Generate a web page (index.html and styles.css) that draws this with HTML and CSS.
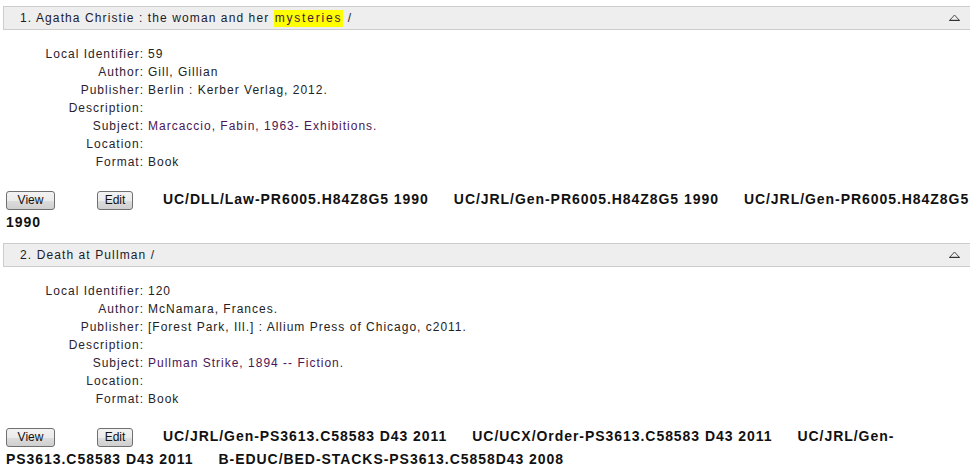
FILE: index.html
```html
<!DOCTYPE html>
<html>
<head>
<meta charset="utf-8">
<link rel="stylesheet" href="styles.css">
</head>
<body>
<div class="results">
  <div class="record">
    <div class="rec-head">
      <span class="title">1. Agatha Christie : the woman and her <mark class="hl">mysteries</mark> /</span>
      <svg class="toggle" width="11" height="7" viewBox="0 0 11 7"><path d="M0.5 6.5 L5.5 1 L10.5 6.5 Z" fill="none" stroke="#4a4a4a" stroke-width="1"/><path d="M0.5 6.5 H10.5" stroke="#333" stroke-width="1.4"/></svg>
    </div>
    <div class="fields">
      <span class="lbl">Local Identifier:</span><span class="val">59</span>
      <span class="lbl">Author:</span><span class="val">Gill, Gillian</span>
      <span class="lbl">Publisher:</span><span class="val">Berlin : Kerber Verlag, 2012.</span>
      <span class="lbl">Description:</span><span class="val"></span>
      <span class="lbl">Subject:</span><span class="val link">Marcaccio, Fabin, 1963- Exhibitions.</span>
      <span class="lbl">Location:</span><span class="val"></span>
      <span class="lbl">Format:</span><span class="val">Book</span>
    </div>
    <div class="actions"><button class="btn btn-view">View</button><button class="btn btn-edit">Edit</button><span class="hold">UC/DLL/Law-PR6005.H84Z8G5 1990</span><span class="hold">UC/JRL/Gen-PR6005.H84Z8G5 1990</span><span class="hold">UC/JRL/Gen-PR6005.H84Z8G5 1990</span></div>
  </div>

  <div class="record">
    <div class="rec-head">
      <span class="title">2. Death at Pullman /</span>
      <svg class="toggle" width="11" height="7" viewBox="0 0 11 7"><path d="M0.5 6.5 L5.5 1 L10.5 6.5 Z" fill="none" stroke="#4a4a4a" stroke-width="1"/><path d="M0.5 6.5 H10.5" stroke="#333" stroke-width="1.4"/></svg>
    </div>
    <div class="fields">
      <span class="lbl">Local Identifier:</span><span class="val">120</span>
      <span class="lbl">Author:</span><span class="val">McNamara, Frances.</span>
      <span class="lbl">Publisher:</span><span class="val">[Forest Park, Ill.] : Allium Press of Chicago, c2011.</span>
      <span class="lbl">Description:</span><span class="val"></span>
      <span class="lbl">Subject:</span><span class="val link">Pullman Strike, 1894 -- Fiction.</span>
      <span class="lbl">Location:</span><span class="val"></span>
      <span class="lbl">Format:</span><span class="val">Book</span>
    </div>
    <div class="actions"><button class="btn btn-view">View</button><button class="btn btn-edit">Edit</button><span class="hold">UC/JRL/Gen-PS3613.C58583 D43 2011</span><span class="hold">UC/UCX/Order-PS3613.C58583 D43 2011</span><span class="hold">UC/JRL/Gen-PS3613.C58583 D43 2011</span><span class="hold">B-EDUC/BED-STACKS-PS3613.C5858D43 2008</span></div>
  </div>
</div>
</body>
</html>
```
FILE: styles.css
```css
html, body {
  margin: 0;
  padding: 0;
  overflow: hidden;
  background: #fff;
}
body {
  font-family: "Liberation Sans", Arial, sans-serif;
  font-size: 12px;
  color: #222;
  width: 970px;
}
.results {
  margin: 6px 0 0 3px;
}
.record {
  display: flex;
  flex-direction: column;
}
.rec-head {
  height: 22px;
  border: 1px solid #cccccc;
  border-right: none;
  background: #eeeeee;
  display: flex;
  align-items: center;
  justify-content: space-between;
  padding: 0 10px 0 16px;
}
.title {
  letter-spacing: 1.1px;
  color: #221a2a;
}
.hl {
  background: #ffff00;
  color: #3a1a3a;
  padding: 1px 1px 2px 1px;
  letter-spacing: 1.8px;
}
.toggle {
  display: block;
  margin-top: -1px;
}
.fields {
  display: grid;
  grid-template-columns: 141px auto;
  column-gap: 4px;
  margin-top: 15px;
  line-height: 18px;
  letter-spacing: 1px;
  color: #222;
}
.lbl {
  text-align: right;
  color: #2a2230;
}
.val.link {
  color: #4b1656;
}
.actions {
  margin: 17px 0 9px 3px;
  line-height: 23px;
  font-weight: bold;
  font-size: 14px;
  letter-spacing: 0.95px;
  color: #111;
}
.btn {
  display: inline-block;
  vertical-align: middle;
  height: 19px;
  padding: 0;
  font-family: "Liberation Sans", Arial, sans-serif;
  font-size: 12px;
  font-weight: normal;
  letter-spacing: 0;
  color: #111;
  border: 1px solid #707070;
  border-radius: 3px;
  background: linear-gradient(#f2f2f2 0%, #ebebeb 50%, #dddddd 51%, #cfcfcf 100%);
  line-height: 17px;
}
.btn-view {
  width: 49px;
  margin-right: 42px;
}
.btn-edit {
  width: 36px;
  margin-right: 30px;
}
.hold {
  margin-right: 25px;
}
```
